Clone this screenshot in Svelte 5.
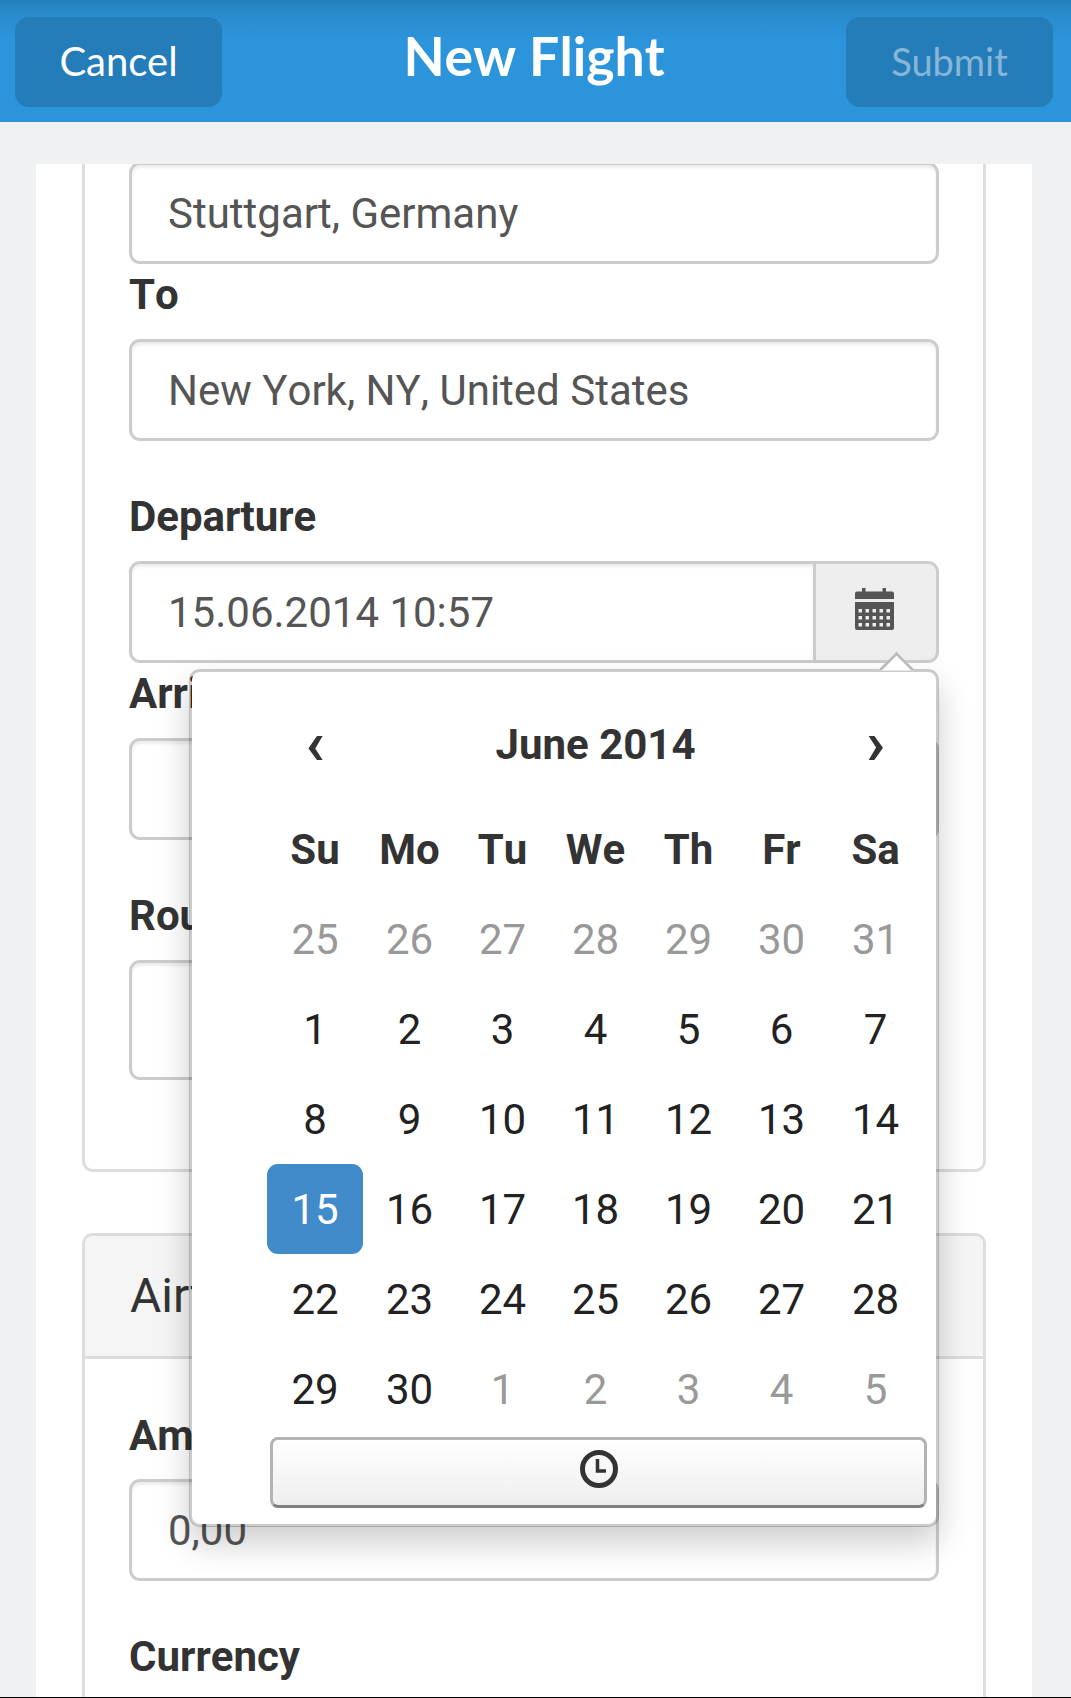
<script>
  const dow = ["Su", "Mo", "Tu", "We", "Th", "Fr", "Sa"];

  // June 2014 as shown in the picker, old = days of the neighbouring months
  const weeks = [
    [[25, 1], [26, 1], [27, 1], [28, 1], [29, 1], [30, 1], [31, 1]],
    [[1], [2], [3], [4], [5], [6], [7]],
    [[8], [9], [10], [11], [12], [13], [14]],
    [[15, 0, 1], [16], [17], [18], [19], [20], [21]],
    [[22], [23], [24], [25], [26], [27], [28]],
    [[29], [30], [1, 1], [2, 1], [3, 1], [4, 1], [5, 1]],
  ];
</script>

<div class="page">
  <header class="bar">
    <button class="barBtn">Cancel</button>
    <h1>New Flight</h1>
    <button class="barBtn disabled">Submit</button>
  </header>

  <main class="content">
    <div class="scroll">
      <section class="panel first">
        <div class="body">
          <div class="input">Stuttgart, Germany</div>
          <div class="label near">To</div>
          <div class="input">New York, NY, United States</div>

          <div class="label">Departure</div>
          <div class="group">
            <div class="input">15.06.2014 10:57</div>
            <div class="addon">
              <svg width="39" height="42" viewBox="0 0 39 42">
                <path
                  fill="#555"
                  d="M7 0h3.5v3.5h17V0H31v3.5h6a2 2 0 0 1 2 2V11H0V5.500a2 2 0 0 1 2-2h5z"
                />
                <path
                  fill="#555"
                  fill-rule="evenodd"
                  d="M0 14h39v26a2 2 0 0 1-2 2H2a2 2 0 0 1-2-2zM3.500 21v3.500H7V21zm7 0v3.500H14V21zm7 0v3.500H21V21zm7 0v3.500H28V21zm7 0v3.500H35V21zM3.500 28v3.500H7V28zm7 0v3.500H14V28zm7 0v3.500H21V28zm7 0v3.500H28V28zm7 0v3.500H35V28zM3.500 35v3.500H7V35zm7 0v3.500H14V35zm7 0v3.500H21V35zm7 0v3.500H28V35zm7 0v3.500H35V35z"
                />
              </svg>
            </div>
          </div>

          <div class="label near">Arrival</div>
          <div class="group">
            <div class="input"></div>
            <div class="addon"></div>
          </div>

          <div class="label">Round</div>
          <div class="input tall"></div>
        </div>
      </section>

      <section class="panel second">
        <div class="heading">Airfare</div>
        <div class="body">
          <div class="label amount">Amount</div>
          <div class="input">0,00</div>
          <div class="label">Currency</div>
        </div>
      </section>
    </div>
  </main>

  <div class="picker">
    <div class="arrow"></div>
    <table>
      <colgroup>
        <col class="firstCol" />
        <col class="midCol" span="5" />
        <col class="lastCol" />
      </colgroup>
      <thead>
        <tr class="title">
          <th class="nav">‹</th>
          <th colspan="5">June 2014</th>
          <th class="nav">›</th>
        </tr>
        <tr class="dow">
          {#each dow as d}
            <th>{d}</th>
          {/each}
        </tr>
      </thead>
      <tbody>
        {#each weeks as week}
          <tr>
            {#each week as [n, old, active]}
              <td class:old class:active>{n}</td>
            {/each}
          </tr>
        {/each}
      </tbody>
    </table>
    <div class="timeBtn">
      <svg width="38" height="38" viewBox="0 0 38 38">
        <circle cx="19" cy="19" r="16.500" fill="none" stroke="#333" stroke-width="5" />
        <path d="M17.500 9v12h8.500" fill="none" stroke="#333" stroke-width="3.500" />
      </svg>
    </div>
  </div>
</div>

<style>
  :global(body) {
    margin: 0;
    background: #000;
  }

  .page {
    position: relative;
    height: 1697px;
    overflow: hidden;
    background: #f0f1f3;
    font-family: Roboto, "Liberation Sans", sans-serif;
    font-kerning: none;
    color: #333;
  }

  .bar {
    box-sizing: border-box;
    height: 122px;
    padding: 17px 18px 15px 15px;
    display: flex;
    justify-content: space-between;
    background: linear-gradient(#2581bc 0, #2a8dcf 18px, #2b94da 40px);
  }

  .bar h1 {
    margin: 0;
    padding-top: 8px;
    font-family: Lato, "Open Sans", sans-serif;
    font-size: 53.500px;
    line-height: 60px;
    font-weight: 700;
    color: #fff;
  }

  .barBtn {
    width: 207px;
    height: 90px;
    padding: 0 0 3px;
    border: 0;
    border-radius: 14px;
    background: #247db8;
    color: #fff;
    font-family: Lato, "Open Sans", sans-serif;
    font-size: 40px;
  }

  .barBtn.disabled {
    color: #86b6d8;
    font-size: 38px;
  }

  .content {
    padding: 42px 39px 0 36px;
  }

  .scroll {
    height: 1533px;
    overflow: hidden;
    background: #fff;
    padding: 0 46px;
  }

  .panel {
    border: 3px solid #ddd;
    border-radius: 11px;
    background: #fff;
  }

  .panel.first {
    margin-top: -32px;
    height: 1040px;
    box-sizing: border-box;
  }

  .panel.second {
    margin-top: 61px;
    height: 600px;
    box-sizing: border-box;
  }

  .body {
    padding: 27px 44px 0;
  }

  .heading {
    height: 123px;
    box-sizing: border-box;
    padding: 0 45px;
    border-bottom: 3px solid #ddd;
    background: #f5f5f5;
    border-radius: 8px 8px 0 0;
    font-size: 48px;
    line-height: 120px;
    font-weight: 400;
  }

  .label {
    margin-top: 49px;
    margin-bottom: 19px;
    height: 52px;
    font-size: 42px;
    line-height: 54px;
    font-weight: 700;
    color: #333;
  }

  .label.near {
    margin-top: 4px;
  }

  .label.amount {
    margin-top: 23px;
    margin-bottom: 18px;
  }

  .input {
    box-sizing: border-box;
    height: 102px;
    padding: 0 36px;
    flex: 1;
    border: 3px solid #ccc;
    border-radius: 11px;
    background: #fff;
    box-shadow: inset 0 3px 3px rgba(0, 0, 0, 0.075);
    font-size: 42px;
    line-height: 97px;
    color: #555;
  }

  .input.tall {
    height: 120px;
    margin-right: 30px;
  }

  .group {
    display: flex;
  }

  .group .input {
    border-right: 0;
    border-radius: 11px 0 0 11px;
  }

  .addon {
    box-sizing: border-box;
    width: 126px;
    height: 102px;
    padding: 0 4px 6px 0;
    display: flex;
    align-items: center;
    justify-content: center;
    border: 3px solid #ccc;
    border-radius: 0 11px 11px 0;
    background: #eee;
  }

  .picker {
    position: absolute;
    left: 189px;
    top: 669px;
    box-sizing: border-box;
    width: 750px;
    height: 858px;
    padding: 27px 0 0 75px;
    border: 3px solid rgba(0, 0, 0, 0.2);
    border-radius: 11px;
    background: #fff;
    background-clip: padding-box;
    box-shadow: 0 16px 33px rgba(0, 0, 0, 0.2);
  }

  .arrow {
    position: absolute;
    left: 691px;
    top: -15px;
    box-sizing: border-box;
    width: 27px;
    height: 27px;
    border-top: 3px solid #bbb;
    border-left: 3px solid #bbb;
    background: #fff;
    clip-path: polygon(0 0, 100% 0, 0 100%);
    transform: rotate(45deg);
  }

  table {
    border-collapse: collapse;
    width: 656px;
    table-layout: fixed;
    font-size: 42px;
    color: #222;
    text-align: center;
  }

  .firstCol {
    width: 96px;
  }

  .midCol {
    width: 93px;
  }

  .lastCol {
    width: 95px;
  }

  th {
    padding: 0;
    font-weight: 700;
    color: #333;
  }

  .title th {
    height: 90px;
  }

  .dow th {
    height: 105px;
    padding-top: 15px;
    box-sizing: border-box;
  }

  .title .nav {
    padding-bottom: 4px;
    font-size: 62px;
    box-sizing: border-box;
  }

  td {
    height: 90px;
    padding: 0;
  }

  td.old {
    color: #999;
  }

  td.active {
    background: #428bca;
    color: #fff;
    border-radius: 11px;
  }

  .timeBtn {
    box-sizing: border-box;
    width: 657px;
    height: 71px;
    margin: 3px 0 0 3px;
    padding-bottom: 8px;
    display: flex;
    align-items: center;
    justify-content: center;
    border: 3px solid #b3b3b3;
    border-bottom-color: #808080;
    border-radius: 8px;
    background: linear-gradient(#fff, #eee);
  }
</style>
